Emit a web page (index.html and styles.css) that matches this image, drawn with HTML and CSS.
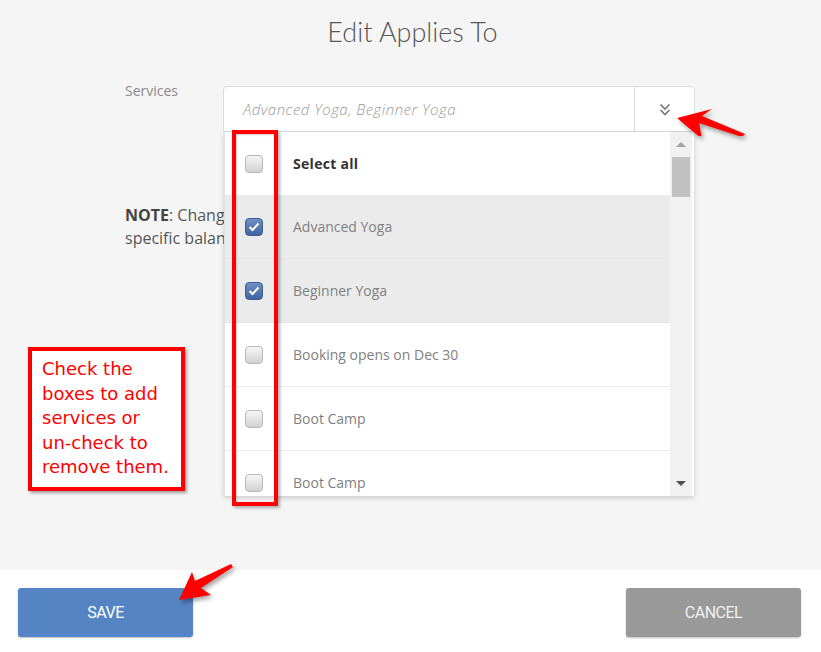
FILE: index.html
```html
<!DOCTYPE html>
<html lang="en">
<head>
<meta charset="utf-8">
<title>Edit Applies To</title>
<link rel="stylesheet" href="styles.css">
</head>
<body>
<div class="page">
  <main class="content">
    <h1 class="title">Edit Applies To</h1>
    <div class="form-row">
      <label class="label">Services</label>
      <div class="field">
        <div class="select">
          <span class="select-value">Advanced Yoga, Beginner Yoga</span>
          <span class="select-toggle">
            <svg width="12" height="14" viewBox="0 0 12 14"><path d="M1.5 1.5 L6 6 L10.5 1.5 M1.5 7 L6 11.5 L10.5 7" fill="none" stroke="#7a7a7a" stroke-width="1.7"/></svg>
          </span>
        </div>
        <div class="dropdown">
          <ul class="options">
            <li class="option option-all"><span class="cb"></span><span class="opt-text">Select all</span></li>
            <li class="option is-selected"><span class="cb cb-checked"><svg width="12" height="10" viewBox="0 0 12 10"><path d="M1.5 5 L4.5 8 L10.5 1.5" fill="none" stroke="#fff" stroke-width="2"/></svg></span><span class="opt-text">Advanced Yoga</span></li>
            <li class="option is-selected"><span class="cb cb-checked"><svg width="12" height="10" viewBox="0 0 12 10"><path d="M1.5 5 L4.5 8 L10.5 1.5" fill="none" stroke="#fff" stroke-width="2"/></svg></span><span class="opt-text">Beginner Yoga</span></li>
            <li class="option"><span class="cb"></span><span class="opt-text">Booking opens on Dec 30</span></li>
            <li class="option"><span class="cb"></span><span class="opt-text">Boot Camp</span></li>
            <li class="option"><span class="cb"></span><span class="opt-text">Boot Camp</span></li>
          </ul>
          <div class="scrollbar">
            <span class="sb-up"></span>
            <span class="sb-thumb"></span>
            <span class="sb-fill"></span>
            <span class="sb-down"></span>
          </div>
        </div>
      </div>
    </div>
    <p class="note"><span class="note-line"><b>NOTE</b>: Changes to applicable services</span><span class="note-line">specific balances already issued</span></p>

    <div class="callout">Check the boxes to add services or un&#8209;check to remove them.</div>
    <div class="highlight"></div>
    <svg class="arrow arrow-toggle" width="80" height="45" viewBox="0 0 80 45"><polygon points="2,27 37,18 27,25 70,43 67,46 24,32 27,48" fill="#f00"/></svg>
  </main>
  <footer class="footer">
    <button class="btn btn-save">SAVE</button>
    <button class="btn btn-cancel">CANCEL</button>
    <svg class="arrow arrow-save" width="64" height="44" viewBox="0 0 64 44"><polygon points="3,37 16,9 19,18 55,1 57,4 25,25 35,32" fill="#f00"/></svg>
  </footer>
</div>
</body>
</html>
```
FILE: styles.css
```css
* { box-sizing: border-box; }
html, body { margin: 0; padding: 0; }
body {
  font-family: "Open Sans", "Lato", sans-serif;
  background: #fff;
  width: 821px;
  height: 652px;
  overflow: hidden;
}
.page { display: flex; flex-direction: column; height: 652px; }
.content {
  position: relative;
  height: 570px;
  background: #f5f5f5;
  padding-top: 14px;
}
.title {
  margin: 0;
  text-align: center;
  font-family: "Lato", sans-serif;
  font-size: 27px;
  line-height: 36px;
  font-weight: 300;
  color: #555;
  padding-left: 4px;
}
.form-row {
  display: flex;
  margin-top: 36px;
  padding-left: 125px;
}
.label {
  width: 98px;
  font-size: 14px;
  line-height: 16px;
  margin-top: -3px;
  color: #8a8a8a;
}
.field { position: relative; width: 472px; }
.select {
  display: flex;
  height: 46px;
  background: #fff;
  border: 1px solid #dcdcdc;
  border-radius: 4px 4px 0 0;
}
.select-value {
  flex: 1;
  display: flex;
  align-items: center;
  padding-left: 19px;
  font-style: italic;
  font-weight: 300;
  font-size: 15px;
  letter-spacing: 0.5px;
  color: #999;
}
.select-toggle {
  width: 60px;
  border-left: 1px solid #dcdcdc;
  display: flex;
  align-items: center;
  justify-content: center;
  padding-top: 2px;
}
.dropdown {
  position: absolute;
  top: 46px;
  left: 1px;
  width: 470px;
  height: 364px;
  background: #fff;
  display: flex;
  box-shadow: 0 2px 5px rgba(0,0,0,0.18);
  border-left: 1px solid #e2e2e2;
  z-index: 2;
}
.options {
  list-style: none;
  margin: 0;
  padding: 0;
  flex: 1;
  overflow: hidden;
}
.option {
  height: 64px;
  display: flex;
  align-items: center;
  padding-left: 20px;
  border-bottom: 1px solid #ececec;
  font-size: 14px;
  color: #808080;
}
.option.is-selected { background: #ebebeb; border-bottom-color: #e4e4e4; }
.option-all { border-bottom: none; height: 63px; }
.option-all .opt-text { font-weight: 700; color: #333; letter-spacing: 0.3px; }
.cb {
  width: 18px;
  height: 18px;
  flex-shrink: 0;
  border-radius: 4px;
  border: 1px solid #b8b8b8;
  background: linear-gradient(#f6f6f6, #d2d2d2);
  display: flex;
  align-items: center;
  justify-content: center;
  margin-right: 30px;
  margin-top: 1px;
}
.cb-checked {
  border-color: #3d5f91;
  background: linear-gradient(#6e8fc0, #3f64a0);
}
.scrollbar {
  width: 22px;
  background: #f1f1f1;
  display: flex;
  flex-direction: column;
  align-items: center;
  padding: 10px 2px 10px;
  margin-right: 2px;
}
.sb-up {
  width: 0; height: 0;
  border-left: 5px solid transparent;
  border-right: 5px solid transparent;
  border-bottom: 5px solid #a3a3a3;
}
.sb-thumb {
  width: 18px;
  height: 40px;
  margin-top: 10px;
  background: #c1c1c1;
}
.sb-fill { flex: 1; }
.sb-down {
  width: 0; height: 0;
  border-left: 5px solid transparent;
  border-right: 5px solid transparent;
  border-top: 5px solid #505050;
}
.note {
  margin: 72px 0 0 125px;
  width: 99px;
  overflow: hidden;
  white-space: nowrap;
  font-size: 16px;
  line-height: 23px;
  color: #555;
  font-weight: 400;
}
.note-line { display: block; }
.note b { color: #444; }
.callout {
  position: absolute;
  left: 28px;
  top: 347px;
  width: 157px;
  height: 144px;
  border: 4px solid #f00;
  background: #fff;
  padding: 6px 0 0 10px;
  font-family: "DejaVu Sans", "Verdana", sans-serif;
  font-size: 18px;
  line-height: 24.6px;
  color: #f00;
  box-shadow: 2px 2px 3px rgba(0,0,0,0.35);
  z-index: 3;
}
.highlight {
  position: absolute;
  left: 232px;
  top: 130px;
  width: 46px;
  height: 376px;
  border: 4px solid #f00;
  box-shadow: 2px 2px 3px rgba(0,0,0,0.3), inset 1px 1px 2px rgba(0,0,0,0.2);
  z-index: 3;
}
.arrow {
  position: absolute;
  filter: drop-shadow(2px 3px 2px rgba(0,0,0,0.35));
  z-index: 4;
}
.arrow-toggle { left: 675px; top: 91px; }
.footer {
  position: relative;
  flex: 1;
  background: #fff;
  display: flex;
  justify-content: space-between;
  padding: 18px 20px 0 18px;
}
.btn {
  width: 175px;
  height: 49px;
  border: none;
  border-radius: 3px;
  font-family: "Roboto", "Lato", sans-serif;
  font-size: 16px;
  letter-spacing: -0.5px;
  color: #fff;
  box-shadow: 0 1px 2px rgba(0,0,0,0.25);
}
.btn-save { background: #5584c4; }
.btn-cancel { background: #999; color: #f0f0f0; }
.arrow-save { left: 176px; top: -7px; }
```
